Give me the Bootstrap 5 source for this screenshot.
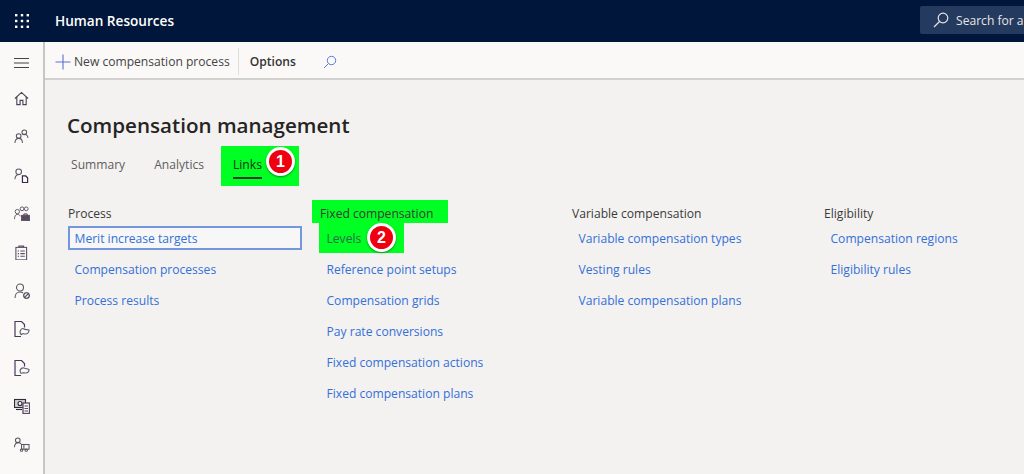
<!DOCTYPE html>
<html lang="en">
<head>
<meta charset="utf-8">
<title>Compensation management</title>
<link href="https://cdn.jsdelivr.net/npm/bootstrap@5.3.0/dist/css/bootstrap.min.css" rel="stylesheet">
<style>
html,body{height:474px;overflow:hidden}
body{font-family:"Open Sans","Noto Sans",sans-serif;font-size:12.1px;background:#f3f2f1;color:#333}
.app-bar{height:42px;background:#00163a;padding:0;flex-wrap:nowrap;overflow:hidden}
.waffle{width:44px;display:flex;justify-content:center}
.app-name{color:#fff;font-weight:600;font-size:13.6px;margin-left:11px;padding:0}
.app-search{position:absolute;left:920px;top:6px;width:104px;height:28px;background:#243a5e;color:#e6e6e6;font-size:12.1px;display:flex;align-items:center;gap:7px;padding:2px 0 0 13px;border-radius:2px 0 0 2px;white-space:nowrap}
.app-search svg{flex:0 0 16px;margin-top:-2px}
.shell{height:432px}
.side-rail{width:45px;flex:0 0 45px;background:#faf9f8;border-right:2px solid #c8c6c4;padding-top:8px}
.rail-item{height:38.5px;display:flex;justify-content:center;align-items:center;width:43px;flex:0 0 38.5px}
.rail-item.rail-top{height:25px;flex-basis:25px;margin-bottom:4px}
.tool-bar{height:38px;background:#faf9f8;border-bottom:2px solid #d2d0ce;padding:5px 0 0 10px}
.tool-btn{font-size:12.1px;padding:0;border:0;color:#444;border-radius:0;display:flex;align-items:center;gap:3px}
.tool-sep{width:1px;height:27px;background:#e1dfdd;margin:-2px 11px 0 8px}
.tool-strong{font-weight:600;color:#333}
.tool-mag{margin-left:27px;display:flex;margin-top:-2px}
.page-area{padding:0 0 0 23px;overflow:hidden}
.page-title{font-size:20.6px;font-weight:600;color:#252423;margin:30px 0 0 -1px;line-height:30px}
.tab-row{margin-top:6px;height:40px;margin-left:-1px}
.tab-link{padding:0;color:#605e5c;font-size:12.1px;display:block;position:relative}
.tab-link:hover{color:#605e5c}
.tab-a{margin:10px 29px 0 4px}
.tab-b{margin:10px 0 0 0}
.tab-hl{margin:0 0 0 17px;background:#00ff22;width:78px;height:40px;color:#1c2b1c;padding:10px 0 0 12px}
.tab-hl:hover{color:#1c2b1c}
.tab-hl::after{content:"";position:absolute;left:12px;width:29px;top:31px;height:2px;background:#1c3a2a}
.num-dot{position:absolute;width:29px;height:29px;border-radius:50%;background:#ee0010;border:3px solid #fff;color:#fff;font-weight:700;font-size:16px;font-family:"Liberation Sans",sans-serif;display:flex;align-items:center;justify-content:center;box-shadow:0 1px 2px rgba(0,0,0,.45)}
.dot-a{left:45px;top:1px}
.dot-b{left:48px;top:0}
.link-cols{margin-top:14px;flex-wrap:nowrap;width:1010px}
.link-col{flex:0 0 252px}
.col-head{height:23px;line-height:27px;color:#3b3a39;font-size:12.1px;white-space:nowrap}
.head-hl{background:#00ff22;width:136px;margin-left:-8px;padding-left:8px}
.link-list{margin-top:3px}
.link-item{display:block;height:24px;line-height:26px;padding:0 0 0 6.500px;margin-bottom:7px;width:234px;color:#3470d8;text-decoration:none;font-size:12.1px;white-space:nowrap;position:relative}
.link-focus{outline:2px solid #7396dc;outline-offset:-2px;background:#f7f7f7}
.link-hl{background:#00ff22;width:85px;height:30px;margin:-3px 0 4px -1px;padding-left:7.500px;line-height:32px;color:#2c6b4a}
</style>
</head>
<body>
<nav class="navbar app-bar position-relative">
  <div class="waffle">
    <svg width="16" height="16" viewBox="0 0 16 16" fill="#fff"><rect x="1" y="1" width="2.400" height="2.400"/><rect x="6.800" y="1" width="2.400" height="2.400"/><rect x="12.600" y="1" width="2.400" height="2.400"/><rect x="1" y="6.800" width="2.400" height="2.400"/><rect x="6.800" y="6.800" width="2.400" height="2.400"/><rect x="12.600" y="6.800" width="2.400" height="2.400"/><rect x="1" y="12.600" width="2.400" height="2.400"/><rect x="6.800" y="12.600" width="2.400" height="2.400"/><rect x="12.600" y="12.600" width="2.400" height="2.400"/></svg>
  </div>
  <span class="navbar-brand app-name me-auto">Human Resources</span>
  <div class="app-search">
    <svg width="16" height="16" viewBox="0 0 16 16" fill="none" stroke="#e6e6e6" stroke-width="1.200"><circle cx="10" cy="6" r="4.800"/><path d="M6.500 9.500 1 15"/></svg>
    <span>Search for a</span>
  </div>
</nav>
<div class="d-flex shell">
  <aside class="side-rail d-flex flex-column">
    <div class="rail-item rail-top">
      <svg width="15" height="12" viewBox="0 0 15 12" stroke="#444" stroke-width="1.100"><path d="M0 1.500h15M0 6h15M0 10.500h15"/></svg>
    </div>
    <div class="rail-item"><svg width="15" height="15" viewBox="0 0 16 16" fill="none" stroke="#4a4458" stroke-width="1.200"><path d="M1 8 8 1.500 15 8M3 6.500V14.500H6.500V10H9.500V14.500H13V6.500"/></svg></div>
    <div class="rail-item"><svg width="15" height="15" viewBox="0 0 16 16" fill="none" stroke="#5a5560" stroke-width="1.100"><circle cx="11" cy="3.500" r="2.500"/><circle cx="5" cy="7.500" r="2.500"/><path d="M1 15c0-3 1.500-5 4-5s4 2 4 5M9 6c1-.5 1.500-.5 2-.5 2 0 3.500 1.500 4 4"/></svg></div>
    <div class="rail-item"><svg width="15" height="15" viewBox="0 0 16 16" fill="none" stroke="#5a5560" stroke-width="1.100"><circle cx="5" cy="4" r="3"/><path d="M1 12c0-3 1.500-5 5-5"/><path d="M9 8.500h3.500l2 2V15.500H9z" stroke="#3a2a4a" stroke-width="1.300"/></svg></div>
    <div class="rail-item"><svg width="16" height="15" viewBox="0 0 17 16" fill="none" stroke="#5a5560" stroke-width="1"><circle cx="3.500" cy="6" r="2.300"/><circle cx="8.500" cy="3" r="2"/><circle cx="13" cy="3" r="2"/><path d="M.5 14c0-3 1-5 3-5s3 1 3 2"/><rect x="8" y="10" width="8.500" height="5.500" fill="#5a4a66"/><path d="M10.500 10V8.500h3.500V10" stroke="#3a2a4a"/></svg></div>
    <div class="rail-item"><svg width="12.500" height="15.500" viewBox="0 0 14 17" fill="none" stroke="#5a5068" stroke-width="1.200"><rect x="1" y="2.500" width="12" height="14"/><path d="M4.500 2.500V1h5v1.500" stroke-width="1.500"/><path d="M3 6.500h1.500M6 6.500h5M3 9.500h1.500M6 9.500h5M3 12.500h1.500M6 12.500h5"/></svg></div>
    <div class="rail-item"><svg width="16" height="16" viewBox="0 0 16 16" fill="none" stroke="#5a5560" stroke-width="1.100"><circle cx="6" cy="4.500" r="3.500"/><path d="M1 15c0-3.500 2-6 5-6 1.500 0 2.500.5 3 1"/><circle cx="12.500" cy="12.500" r="2.800" stroke="#3a3a4a"/><path d="M10.500 14.500l4-4"/></svg></div>
    <div class="rail-item"><svg width="16" height="16" viewBox="0 0 16 16" fill="none" stroke="#4a3a5a" stroke-width="1.200"><path d="M7 15.500H1V.5h6.500l3 3v3"/><path d="M6 10.500c1-3 3-3.500 4-2.500s3 .5 5 1c0 2-1.500 4-3.500 4s-2.500-1-3.500 0-1.500 1-2-2.500z" stroke="#5a6270"/></svg></div>
    <div class="rail-item"><svg width="16" height="16" viewBox="0 0 16 16" fill="none" stroke="#4a3a5a" stroke-width="1.200"><path d="M7 15.500H1V.5h6.500l3 3v3"/><path d="M6 10.500c1-2.500 3-3 4-2.500s3 .5 5 1.500c0 2-1.500 3.500-3.500 3.500s-2.500-.5-3.500 0-1.500.5-2-2.500z" stroke="#5a6270"/></svg></div>
    <div class="rail-item"><svg width="16" height="16" viewBox="0 0 16 16" fill="none" stroke="#2f2a3a" stroke-width="1.100"><rect x=".5" y="1.500" width="11" height="8" fill="#cfd0d2"/><circle cx="6" cy="5.500" r="2" fill="#faf9f8"/><path d="M2 11.500h6"/><rect x="9" y="5" width="6.500" height="10.500" fill="#faf9f8" stroke="#5a4a66" stroke-width="1.300"/><path d="M10.500 8h3.500M10.500 10.500h3.500M10.500 13h3.500" stroke="#5a4a66"/></svg></div>
    <div class="rail-item"><svg width="16" height="15" viewBox="0 0 17 16" fill="none" stroke="#5a5560" stroke-width="1.100"><circle cx="4" cy="3.500" r="2.500"/><path d="M.5 11c0-3 1.500-5 4-5 1.500 0 2.500.5 3 1.500"/><rect x="8" y="8" width="8" height="5"/><circle cx="8" cy="14" r="1.300"/><circle cx="13" cy="14" r="1.300"/><path d="M10.500 8v5"/></svg></div>
  </aside>
  <div class="flex-grow-1 d-flex flex-column" style="min-width:0">
    <div class="tool-bar d-flex align-items-center">
      <button type="button" class="btn tool-btn">
        <svg width="16" height="16" viewBox="0 0 16 16" stroke="#5a6fd0" stroke-width="1.100"><path d="M8 .5v15M.5 8h15"/></svg>
        <span>New compensation process</span>
      </button>
      <span class="tool-sep"></span>
      <button type="button" class="btn tool-btn tool-strong">Options</button>
      <span class="tool-mag">
        <svg width="14" height="14" viewBox="0 0 14 14" fill="none" stroke="#5a7bd8" stroke-width="1"><circle cx="8.500" cy="5.500" r="4.200"/><path d="M5.500 8.500 1 13"/></svg>
      </span>
    </div>
    <main class="page-area flex-grow-1">
      <h1 class="page-title">Compensation management</h1>
      <ul class="nav tab-row">
        <li class="nav-item"><a class="nav-link tab-link tab-a" href="#">Summary</a></li>
        <li class="nav-item"><a class="nav-link tab-link tab-b" href="#">Analytics</a></li>
        <li class="nav-item"><a class="nav-link tab-link tab-hl" href="#">Links<span class="num-dot dot-a">1</span></a></li>
      </ul>
      <div class="d-flex link-cols">
        <section class="link-col">
          <div class="col-head">Process</div>
          <div class="link-list">
            <a class="link-item link-focus" href="#">Merit increase targets</a>
            <a class="link-item" href="#">Compensation processes</a>
            <a class="link-item" href="#">Process results</a>
          </div>
        </section>
        <section class="link-col">
          <div class="col-head head-hl">Fixed compensation</div>
          <div class="link-list">
            <a class="link-item link-hl" href="#">Levels<span class="num-dot dot-b">2</span></a>
            <a class="link-item" href="#">Reference point setups</a>
            <a class="link-item" href="#">Compensation grids</a>
            <a class="link-item" href="#">Pay rate conversions</a>
            <a class="link-item" href="#">Fixed compensation actions</a>
            <a class="link-item" href="#">Fixed compensation plans</a>
          </div>
        </section>
        <section class="link-col">
          <div class="col-head">Variable compensation</div>
          <div class="link-list">
            <a class="link-item" href="#">Variable compensation types</a>
            <a class="link-item" href="#">Vesting rules</a>
            <a class="link-item" href="#">Variable compensation plans</a>
          </div>
        </section>
        <section class="link-col">
          <div class="col-head">Eligibility</div>
          <div class="link-list">
            <a class="link-item" href="#">Compensation regions</a>
            <a class="link-item" href="#">Eligibility rules</a>
          </div>
        </section>
      </div>
    </main>
  </div>
</div>
<script src="https://cdn.jsdelivr.net/npm/bootstrap@5.3.0/dist/js/bootstrap.bundle.min.js"></script>
</body>
</html>
